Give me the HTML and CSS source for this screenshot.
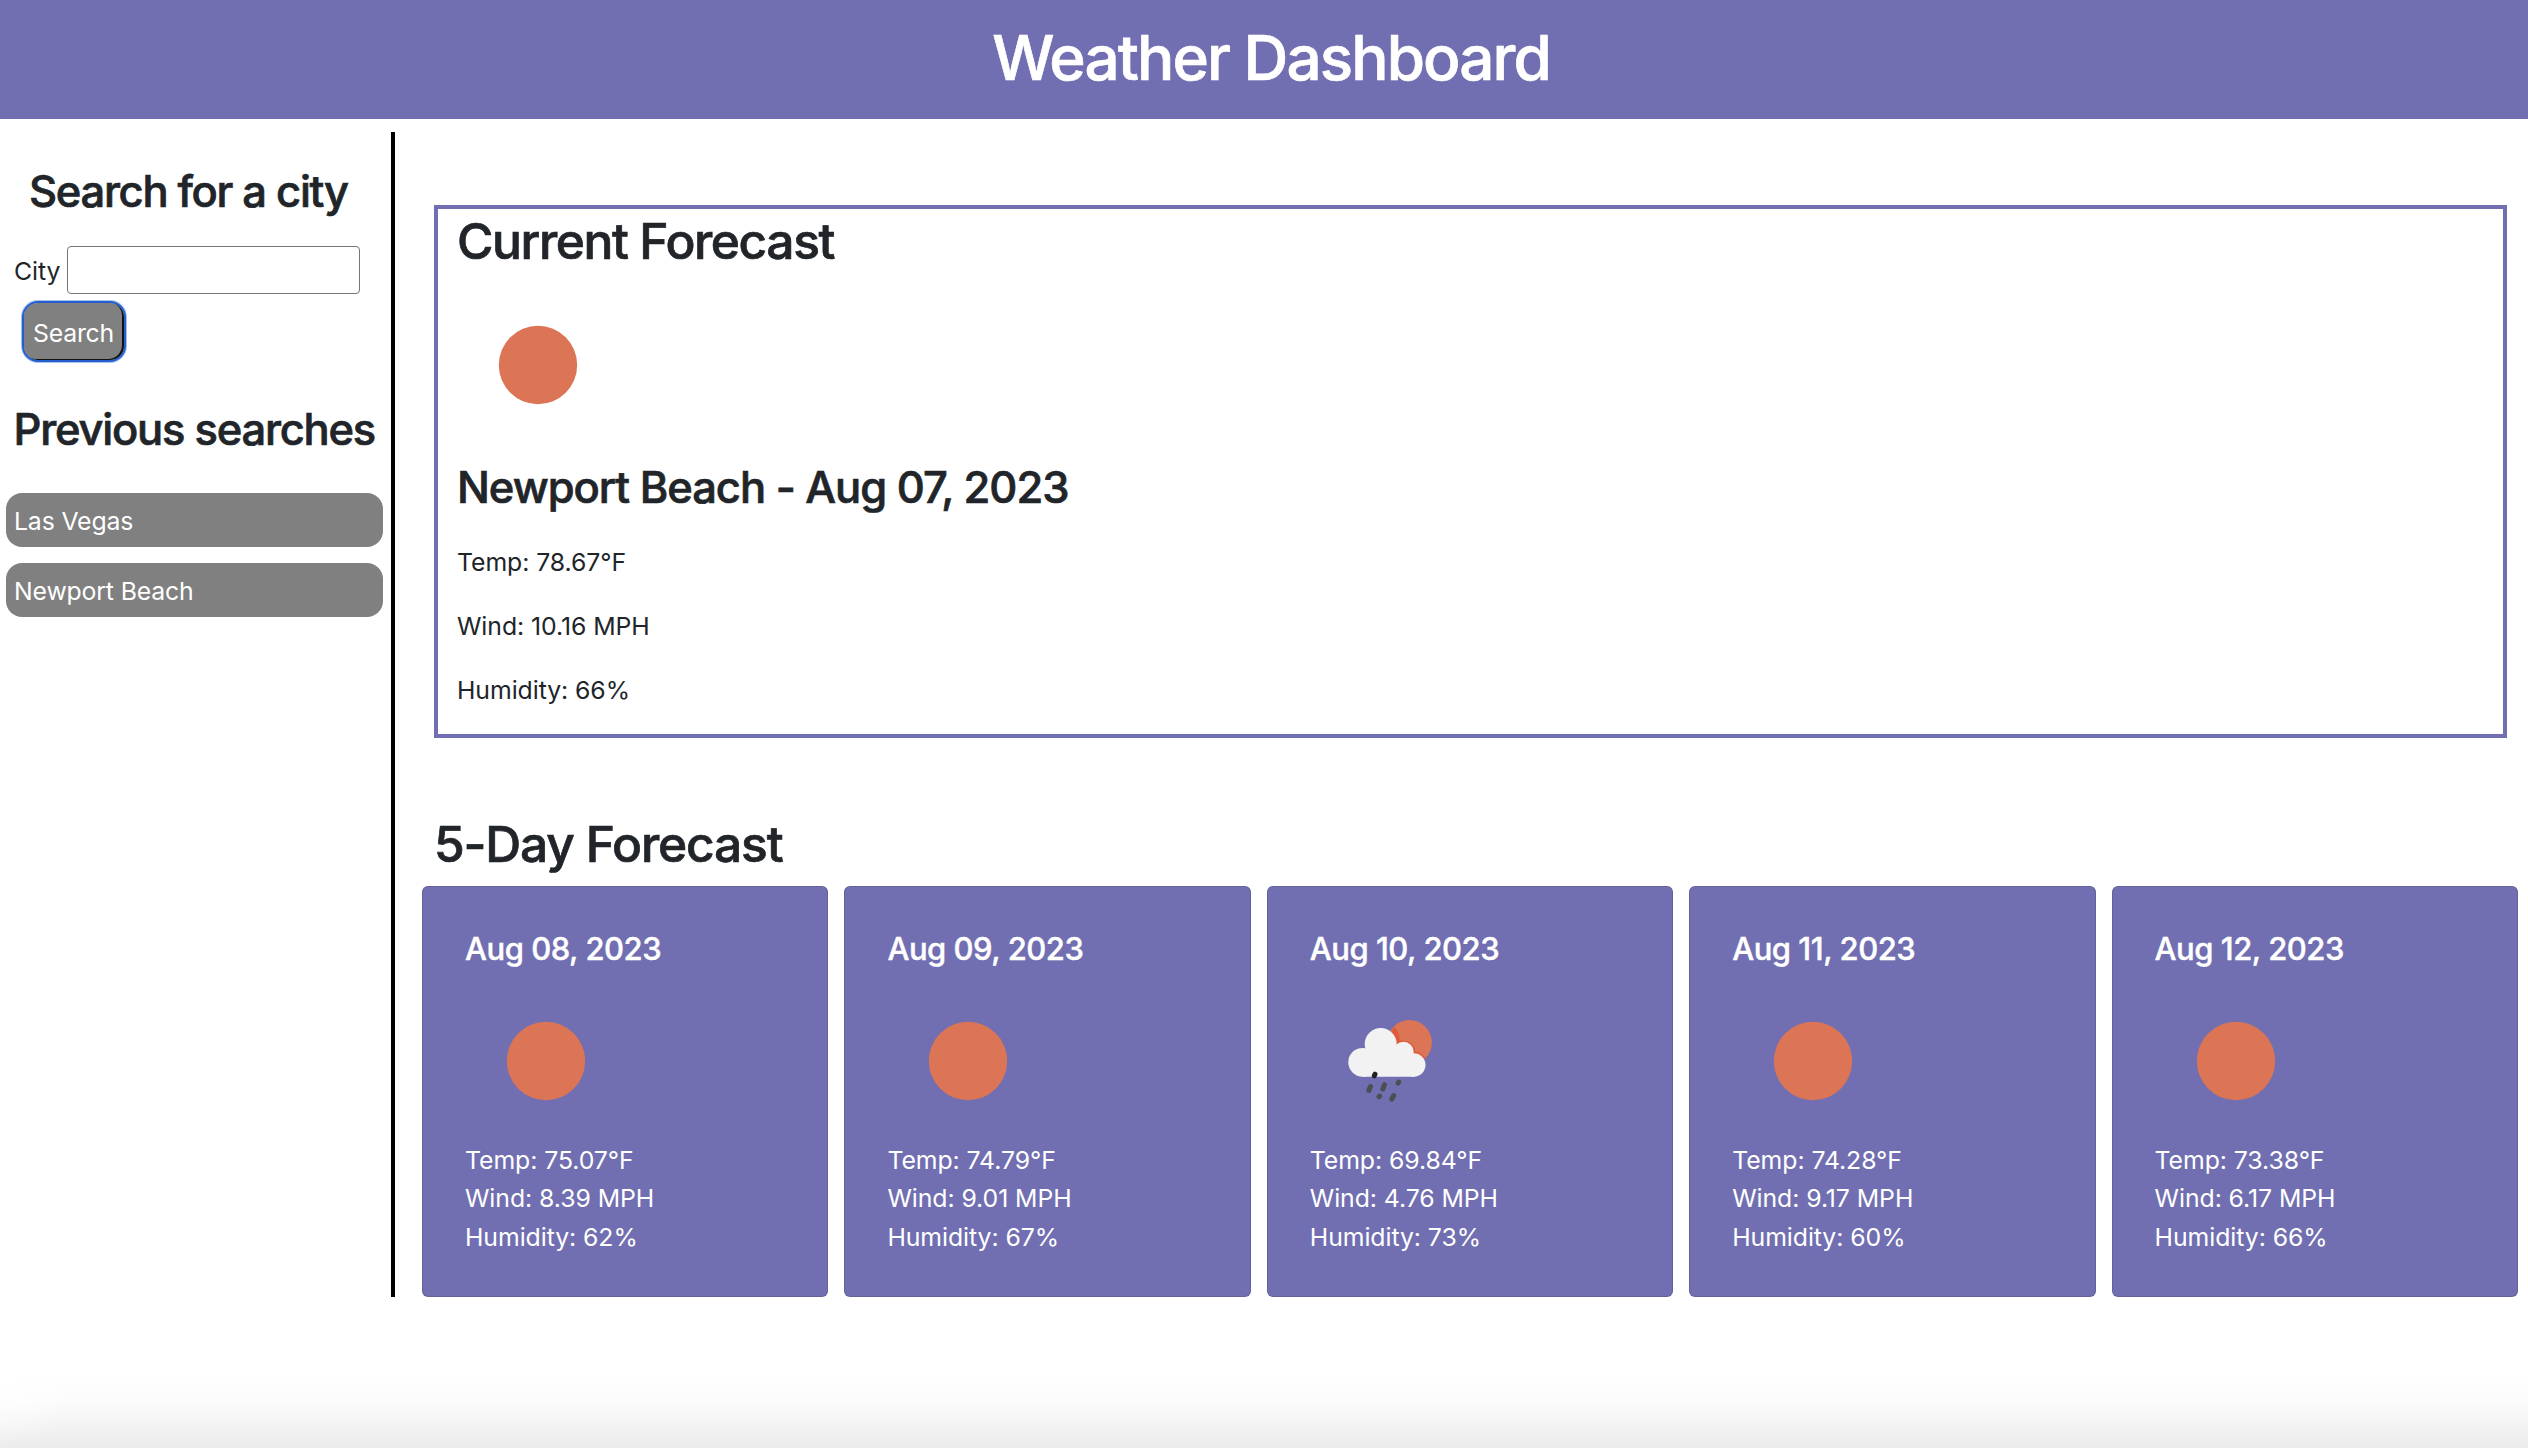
FILE: index.html
```html
<!DOCTYPE html>
<html lang="en">
<head>
<meta charset="utf-8">
<title>Weather Dashboard</title>
<link rel="stylesheet" href="styles.css">
</head>
<body>
<svg class="sprite" aria-hidden="true">
  <symbol id="sun" viewBox="0 0 160 160"><circle cx="80" cy="80" r="39.2" fill="#db7556"/></symbol>
  <symbol id="rain" viewBox="0 0 160 160">
    <circle cx="98.500" cy="61.500" r="22.400" fill="#db7556"/>
    <path d="M83 45.500q6 6 5.500 14 14-1 16 11 6 1 10 7l-10 8-30-20z" fill="#e0593a"/>
    <g fill="#f2f2f2"><circle cx="51.700" cy="81.300" r="14.400"/><circle cx="69.700" cy="63" r="16"/><circle cx="92.500" cy="71" r="10.200"/><circle cx="102.800" cy="84" r="11.700"/><path d="M51.700 95.700V72l18-10 23 5 10.500 14v14.700z"/></g>
    <g stroke="#4e4d52" stroke-width="5" stroke-linecap="round"><path d="M59.500 105.500l-1.700 4M73.500 103.700l-1.700 4.300M87.700 101l-.6 1.200M68.600 115.200l-.6.4M82.700 114.500l-1.900 3.700"/><path stroke="#222" d="M64 93.200l-.7 1.600"/></g>
  </symbol>
</svg>
<header class="header"><h1>Weather Dashboard</h1></header>
<main class="main">
  <aside class="sidebar">
    <h3 class="search-title">Search for a city</h3>
    <form class="search">
      <label for="city">City</label><input id="city" type="text">
      <button type="button">Search</button>
    </form>
    <h3 class="previous-title">Previous searches</h3>
    <ul class="history"><li>Las Vegas</li><li>Newport Beach</li></ul>
  </aside>
  <section class="content">
    <article class="current">
      <h2>Current Forecast</h2>
      <svg class="icon"><use href="#sun"/></svg>
      <h3>Newport Beach - Aug 07, 2023</h3>
      <p>Temp: 78.67°F</p>
      <p>Wind: 10.16 MPH</p>
      <p>Humidity: 66%</p>
    </article>
    <h2 class="five-title">5-Day Forecast</h2>
    <div class="cards">
      <article class="card"><h5>Aug 08, 2023</h5><svg class="icon"><use href="#sun"/></svg><p>Temp: 75.07°F</p><p>Wind: 8.39 MPH</p><p>Humidity: 62%</p></article>
      <article class="card"><h5>Aug 09, 2023</h5><svg class="icon"><use href="#sun"/></svg><p>Temp: 74.79°F</p><p>Wind: 9.01 MPH</p><p>Humidity: 67%</p></article>
      <article class="card"><h5>Aug 10, 2023</h5><svg class="icon"><use href="#rain"/></svg><p>Temp: 69.84°F</p><p>Wind: 4.76 MPH</p><p>Humidity: 73%</p></article>
      <article class="card"><h5>Aug 11, 2023</h5><svg class="icon"><use href="#sun"/></svg><p>Temp: 74.28°F</p><p>Wind: 9.17 MPH</p><p>Humidity: 60%</p></article>
      <article class="card"><h5>Aug 12, 2023</h5><svg class="icon"><use href="#sun"/></svg><p>Temp: 73.38°F</p><p>Wind: 6.17 MPH</p><p>Humidity: 66%</p></article>
    </div>
  </section>
</main>
<div class="shade"></div>
</body>
</html>
```
FILE: styles.css
```css
* { box-sizing: border-box; }
body {
  margin: 0;
  height: 1448px;
  overflow: hidden;
  position: relative;
  background: #fff;
  color: #212529;
  font: 400 24.8px/38.4px Inter, "Liberation Sans", sans-serif;
  letter-spacing: -.06px;
}
h1, h2, h3, h5, p, ul { margin: 0; padding: 0; }
h1, h2, h3, h5 { font-weight: 500; -webkit-text-stroke: .7px currentColor; }
p { white-space: nowrap; }
.sprite { display: none; }
.header { height: 119px; padding: 19px 0 0 14px; background: #716fb1; color: #fff; text-align: center; }
h1 { font-size: 62px; line-height: 77px; letter-spacing: -1.9px; }
h2 { font-size: 49.7px; line-height: 61px; letter-spacing: -1.42px; }
h3 { font-size: 43.5px; line-height: 54px; letter-spacing: -1.3px; white-space: nowrap; }
h5 { font-size: 31px; line-height: 38px; letter-spacing: -.48px; -webkit-text-stroke-width: .4px; }
.main { display: flex; height: 1165px; margin-top: 13px; }
.sidebar { width: 395px; flex: none; padding-top: 32px; border-right: 4px solid #000; }
.search-title { padding-left: 29px; }
.search { display: flex; flex-wrap: wrap; margin-top: 28px; padding-left: 14px; }
.search label { width: 53px; line-height: 50px; height: 48px; }
.search input { width: 293px; height: 48px; border: 1px solid #767676; border-radius: 4px; padding: 0; }
.search button {
  width: 100px; height: 57px; margin: 9px 0 0 10px; padding: 3px 1px 0 0;
  font: inherit; letter-spacing: -.2px; color: #fff; background: #808080;
  border: 0; border-radius: 14px;
  box-shadow: inset -2px -1px #111, 0 0 0 3px #a9c3ef;
  outline: 2px solid #255fcd;
}
.previous-title { margin-top: 42px; padding-left: 13.500px; letter-spacing: -1.23px; }
.history { list-style: none; display: flex; flex-direction: column; gap: 16px; margin: 37px 8px 0 6px; }
.history li { height: 54px; padding: 0 8px; line-height: 56px; border-radius: 16px; background: #808080; color: #fff; letter-spacing: -.15px; }
.content { flex: 1; padding: 73px 10px 0 27px; }
.current { height: 533px; margin: 0 11px 0 12px; padding: 2px 19px; border: 4px solid #716fb1; }
.icon { display: block; width: 160px; height: 160px; }
.current .icon { margin: 13px 0 15px 1px; }
.current p { margin-bottom: 25.6px; }
.current h3 { margin-bottom: 29px; letter-spacing: -1.03px; }
.five-title { margin: 76px 0 11px 12px; letter-spacing: -1.17px; }
.cards { display: grid; grid-template-columns: repeat(5, 1fr); gap: 16px; height: 411px; }
.card { padding: 43px 0 0 42px; border: 1px solid rgba(0,0,0,.125); border-radius: 6px; background: #716fb1; color: #fff; }
.card .icon { margin: 13px 0 0 1px; }
.shade {
  position: absolute; inset: auto 0 0; height: 76px;
  background: radial-gradient(ellipse 80px 76px at 0 0, #fff 0, transparent 100%), linear-gradient(rgba(0,0,0,0), rgba(0,0,0,.015) 40%, rgba(0,0,0,.08));
}
```
